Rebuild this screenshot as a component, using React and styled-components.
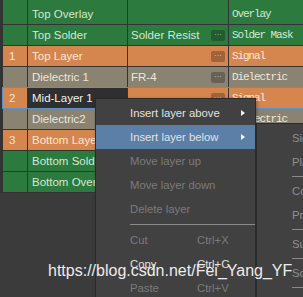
import React from "react";
import styled, {createGlobalStyle} from "styled-components";

const GlobalStyle = createGlobalStyle`
	html, body {
		margin: 0;
		padding: 0;
		background: #3b3b3b;
		overflow: hidden;
	}
	body {
		font-family: "Liberation Sans", Arial, sans-serif;
		width: 303px;
		height: 297px;
	}
`;

const palette = {
	green: {bg: "#2d7a3e", fg: "#d3e8d3"},
	orange: {bg: "#d5864f", fg: "#fde6d4"},
	dielectric: {bg: "#8a8372", fg: "#ebe7db"},
};

const layers = [
	{num: "", name: "Top Overlay", material: "", type: "Overlay", kind: "green", dots: false, tall: true},
	{num: "", name: "Top Solder", material: "Solder Resist", type: "Solder Mask", kind: "green", dots: true},
	{num: "1", name: "Top Layer", material: "", type: "Signal", kind: "orange", dots: true},
	{num: "", name: "Dielectric 1", material: "FR-4", type: "Dielectric", kind: "dielectric", dots: true},
	{num: "2", name: "Mid-Layer 1", material: "", type: "Signal", kind: "orange", dots: true, selected: true},
	{num: "", name: "Dielectric2", material: "", type: "Dielectric", kind: "dielectric", dots: true},
	{num: "3", name: "Bottom Layer", material: "", type: "Signal", kind: "orange", dots: true},
	{num: "", name: "Bottom Solder", material: "", type: "Solder Mask", kind: "green", dots: true},
	{num: "", name: "Bottom Overlay", material: "", type: "Overlay", kind: "green", dots: false},
];

const menuItems = [
	{label: "Insert layer above", arrow: true},
	{label: "Insert layer below", arrow: true, active: true},
	{label: "Move layer up", disabled: true},
	{label: "Move layer down", disabled: true},
	{label: "Delete layer", disabled: true},
	{separator: true},
	{label: "Cut", shortcut: "Ctrl+X", disabled: true},
	{label: "Copy", shortcut: "Ctrl+C"},
	{label: "Paste", shortcut: "Ctrl+V", disabled: true},
];

const subItems = ["Signal", "Plane", "-", "Core", "Prepreg", "-", "Surface Finish", "-", "Solder Mask", "-"];

export default function App() {
	return (
		<Page>
			<GlobalStyle />
			<Table>
				{layers.map((l, i) => (
					<Row key={i} $tall={l.tall} $selected={l.selected}>
						<NumCell $kind={l.kind}>{l.num}</NumCell>
						<NameCell $kind={l.kind} $editing={l.selected}>{l.name}</NameCell>
						<MaterialCell $kind={l.kind}>
							<span>{l.material}</span>
							{l.dots && <Dots>···</Dots>}
						</MaterialCell>
						<TypeCell $kind={l.kind}>{l.type}</TypeCell>
					</Row>
				))}
			</Table>

			<Menu>
				{menuItems.map((m, i) =>
					m.separator ? (
						<Separator key={i} />
					) : (
						<MenuItem key={i} $active={m.active} $disabled={m.disabled}>
							<span>{m.label}</span>
							<span>{m.shortcut}</span>
							{m.arrow ? <Arrow /> : <span />}
						</MenuItem>
					)
				)}
			</Menu>

			<SubMenu>
				{subItems.map((s, i) =>
					s === "-" ? <SubSeparator key={i} /> : <SubItem key={i}>{s}</SubItem>
				)}
			</SubMenu>

			<Watermark>https://blog.csdn.net/Fei_Yang_YF</Watermark>
		</Page>
	);
}

const Page = styled.div`
	position: relative;
	width: 303px;
	height: 297px;
	overflow: hidden;
	background: #3b3b3b;
`;

const Table = styled.div`
	display: flex;
	flex-direction: column;
	gap: 1px;
	padding-left: 3px;
	background: #333333;
	padding-bottom: 1px;
`;

const Row = styled.div`
	display: grid;
	grid-template-columns: 24px 99px 100px 1fr;
	column-gap: 1px;
	height: ${(p) => (p.$tall ? "24px" : "20px")};
	box-shadow: ${(p) => (p.$selected ? "0 0 0 1px #5d8fc8" : "none")};
	position: relative;
	z-index: ${(p) => (p.$selected ? 1 : 0)};
	& > div {
		padding-top: ${(p) => (p.$tall ? "4px" : "0")};
	}
`;

const Cell = styled.div`
	display: flex;
	align-items: center;
	background: ${(p) => palette[p.$kind].bg};
	color: ${(p) => palette[p.$kind].fg};
	font-size: 11.5px;
	white-space: nowrap;
	overflow: hidden;
`;

const NumCell = styled(Cell)`
	padding-left: 6px;
`;

const NameCell = styled(Cell)`
	padding-left: 4px;
	${(p) => p.$editing && "background: #2f2f2f; color: #f0f0f0;"}
`;

const MaterialCell = styled(Cell)`
	justify-content: space-between;
	padding: 0 3px 0 3px;
`;

const Dots = styled.span`
	width: 14px;
	height: 11px;
	border-radius: 2px;
	background: rgba(0, 0, 0, 0.25);
	color: rgba(255, 255, 255, 0.7);
	font-size: 8px;
	line-height: 10px;
	text-align: center;
`;

const TypeCell = styled(Cell)`
	padding-left: 3px;
	font-family: "Liberation Mono", monospace;
	font-size: 11px;
	letter-spacing: -1.1px;
`;

const Menu = styled.div`
	position: absolute;
	left: 95px;
	top: 98px;
	width: 159px;
	height: 210px;
	background: #414141;
	border: 1px solid #2b2b2b;
	padding-top: 2px;
	z-index: 5;
	box-shadow: 1px 1px 3px rgba(0, 0, 0, 0.35);
`;

const MenuItem = styled.div`
	display: grid;
	grid-template-columns: 67px 1fr 14px;
	align-items: center;
	height: 24px;
	padding-left: 34px;
	font-size: 11.3px;
	background: ${(p) => (p.$active ? "#5b7fa7" : "transparent")};
	color: ${(p) => (p.$disabled ? "#7b7b7b" : "#e2e2e2")};
	white-space: nowrap;
`;

const Arrow = styled.span`
	width: 0;
	height: 0;
	border-top: 3.5px solid transparent;
	border-bottom: 3.5px solid transparent;
	border-left: 4px solid #f2f2f2;
`;

const Separator = styled.div`
	height: 1px;
	margin: 3px 0 3px 34px;
	background: #8a8a8a;
`;

const SubMenu = styled.div`
	position: absolute;
	left: 256px;
	top: 123px;
	width: 120px;
	height: 190px;
	background: #414141;
	border: 1px solid #2b2b2b;
	padding-top: 2px;
	z-index: 6;
`;

const SubItem = styled.div`
	height: 24px;
	display: flex;
	align-items: center;
	padding-left: 35px;
	font-size: 11.3px;
	color: #8f8f8f;
	white-space: nowrap;
`;

const SubSeparator = styled.div`
	height: 1px;
	margin: 2px 0 2px 35px;
	background: #8a8a8a;
`;

const Watermark = styled.div`
	position: absolute;
	left: 48px;
	top: 262px;
	font-family: "Liberation Sans", Arial, sans-serif;
	font-size: 16px;
	color: #ececec;
	white-space: nowrap;
	z-index: 10;
`;
